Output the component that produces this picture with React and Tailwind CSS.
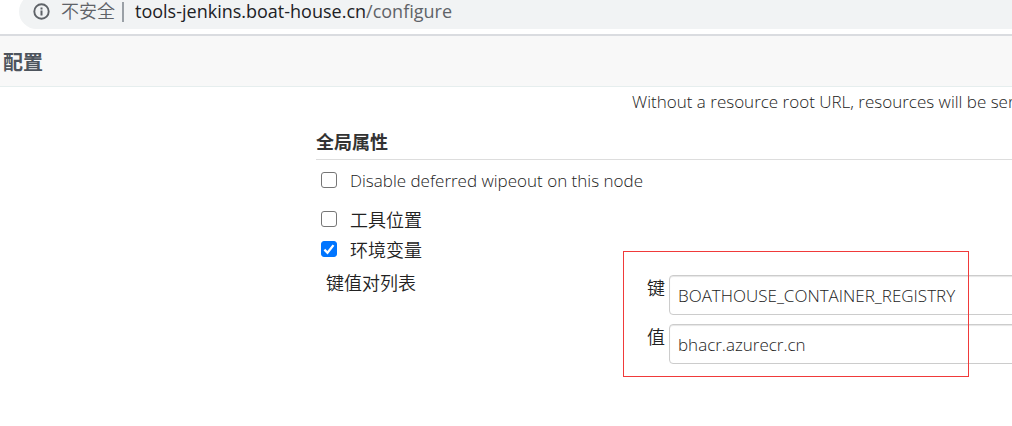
function InfoIcon() {
  return (
    <svg viewBox="0 0 17 17" className="size-[17px] shrink-0" fill="none" aria-hidden="true">
      <circle cx="8.5" cy="8.5" r="7.2" stroke="#5f6368" strokeWidth="1.9" />
      <path d="M7.5 7.6h2v5h-2zM7.5 4.5h2v2h-2z" fill="#5f6368" />
    </svg>
  );
}

function CheckRow({ id, label, checked = false, className = "" }) {
  return (
    <div className={`flex items-start ${className}`}>
      <span className="relative mt-1 ml-[5px] size-4 shrink-0">
        <input
          id={id}
          type="checkbox"
          defaultChecked={checked}
          className="peer block size-4 appearance-none rounded-[3px] border border-[#767676] bg-white checked:border-[#0075ff] checked:bg-[#0075ff]"
        />
        <svg viewBox="0 0 16 16" className="pointer-events-none absolute inset-0 hidden size-4 peer-checked:block" fill="none" aria-hidden="true">
          <path d="M3.4 8.6l3.1 3.1 6-7.6" stroke="#fff" strokeWidth="2.3" />
        </svg>
      </span>
      <label htmlFor={id} className="ml-[13px] leading-[26px]">{label}</label>
    </div>
  );
}

function Field({ id, label, value }) {
  return (
    <div className="flex items-start">
      <label htmlFor={id} className="w-[22px] shrink-0 leading-[26px]">{label}</label>
      <input
        id={id}
        type="text"
        defaultValue={value}
        className="h-10 min-w-0 flex-1 rounded border border-[#ccc] bg-white px-2 text-[17px] shadow-[inset_0_1px_1px_rgba(0,0,0,0.1)] outline-none"
      />
    </div>
  );
}

export default function App() {
  return (
    <div className="min-h-screen overflow-hidden bg-white font-['Open_Sans','Noto_Sans_CJK_SC',sans-serif] text-[17px] font-[350] text-[#222]">
      <div className="border-b-2 border-[#dadce0] pb-[5px] pl-[19px]">
        <div className="-mt-1.5 flex h-[35px] items-center rounded-l-full bg-[#f1f3f4] pl-3.5 text-[#5f6368]">
          <InfoIcon />
          <span className="ml-[11px] text-[18px]">不安全</span>
          <span className="ml-[7px] h-5 w-0.5 bg-[#9aa0a6]" />
          <span className="ml-[11px] whitespace-nowrap text-[18px] font-normal">
            <span className="text-[#202124]">tools-jenkins.boat-house.cn</span>/configure
          </span>
        </div>
      </div>
      <header className="flex h-[51px] items-center border-b border-[#e6eeee] bg-[#f8f8f8] pt-[3px] pl-[3px]">
        <h1 className="text-xl font-bold text-[#4d545d]">配置</h1>
      </header>
      <main className="pl-[316px]">
        <p className="overflow-hidden whitespace-nowrap pt-[3px] pl-[316px] leading-6">
          Without a resource root URL, resources will be ser
        </p>
        <h2 className="mt-[15px] border-b border-[#ddd] pb-[3px] text-[18px] leading-[27px] font-bold text-[#333]">全局属性</h2>
        <CheckRow id="wipeout" label="Disable deferred wipeout on this node" className="mt-2" />
        <CheckRow id="tools" label="工具位置" className="mt-[13px] text-[18px]" />
        <CheckRow id="env" label="环境变量" checked className="mt-1 text-[18px]" />
        <div className="flex pl-2.5 text-[18px]">
          <div className="mt-2 w-[297px] shrink-0 leading-6">键值对列表</div>
          <div className="relative -mr-2 flex-1 space-y-[9px] pt-3 pl-6">
            <Field id="key" label="键" value="BOATHOUSE_CONTAINER_REGISTRY" />
            <Field id="value" label="值" value="bhacr.azurecr.cn" />
            <div className="pointer-events-none absolute -top-3 left-0 h-[126px] w-[346px] border border-[#f03a3a]" />
          </div>
        </div>
      </main>
    </div>
  );
}
